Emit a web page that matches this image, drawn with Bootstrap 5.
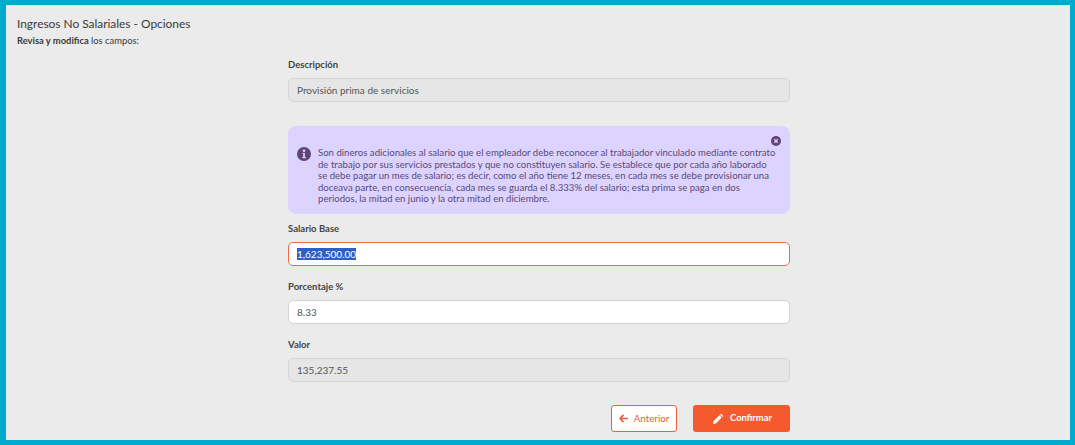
<!DOCTYPE html>
<html lang="es">
<head>
<meta charset="utf-8">
<title>Ingresos No Salariales</title>
<link href="https://cdn.jsdelivr.net/npm/bootstrap@5.3.0/dist/css/bootstrap.min.css" rel="stylesheet">
<style>
html,body{height:100%;margin:0;overflow:hidden}
body{font-family:Lato,"Liberation Sans",sans-serif;background:#ebebeb;color:#3b3b3b}
.frame{height:445px;border:5px solid #00aacc;border-left-width:6px;background:#ebebeb;padding:11px 11px 0 11px}
.page-title{font-size:11.9px;line-height:16px;font-weight:400;margin:0;color:#3a3a3a}
.page-sub{font-size:9.4px;line-height:13px;margin:2px 0 0;color:#3a3a3a}
.page-sub b{font-weight:700}
.form-col{width:502px;margin-left:271px;padding-top:12px}
.fld-label{font-size:9.5px;line-height:12px;font-weight:700;color:#444;margin:0 0 7px;display:block}
.fld-input.form-control{height:24px;font-size:10px;line-height:14px;padding:0 8px;border-radius:5px;border:1px solid #d4d4d4;color:#555;background:#fff;font-family:Lato,"Liberation Sans",sans-serif;box-shadow:none}
.fld-input.form-control:disabled,.fld-input.form-control[readonly]{background:#e6e6e6;color:#555;border-color:#d6d6d6}
.fld-input.is-hot.form-control{border-color:#f26a45}
.fld-input::selection{background:#2e5fc6;color:#fff}
.fld-gap{margin-bottom:15px}
.note{background:#dcd3ff;border-radius:8px;height:88px;margin:24px 0 9px;padding:21px 12px 0 9px;color:#5a4a78;font-size:9.6px;line-height:11.6px;gap:7px}
.note p{margin:0}
.note-x{top:10px;right:9px;width:10px;height:10px;line-height:0}
.btn-back.btn{width:66px;height:27px;padding:0;font-size:9.8px;border:1px solid #e8603c;background:#fff;color:#e8603c;border-radius:3px;gap:6px}
.btn-go.btn{width:97px;height:27px;padding:0 0 0 2px;font-size:9.4px;font-weight:700;border:0;background:#f55a2e;color:#fff;border-radius:3px;gap:7px}
.btn-row{margin-top:23px;gap:16px}
</style>
</head>
<body>
<div class="frame">
  <h1 class="page-title">Ingresos No Salariales - Opciones</h1>
  <p class="page-sub"><b>Revisa y modifica</b> los campos:</p>
  <div class="form-col">
    <label class="fld-label" for="d1">Descripción</label>
    <input id="d1" class="form-control fld-input" value="Provisión prima de servicios" readonly>
    <div class="note position-relative d-flex align-items-start">
      <svg width="14" height="14" viewBox="0 0 14 14" class="flex-shrink-0" aria-hidden="true"><circle cx="7" cy="7" r="7" fill="#5f4673"/><circle cx="7" cy="3.7" r="1.3" fill="#dcd3ff"/><path d="M5.4 5.9h2.5v4.2h.9v1.1H5.3v-1.1h.9V7H5.4z" fill="#dcd3ff"/></svg>
      <p>Son dineros adicionales al salario que el empleador debe reconocer al trabajador vinculado mediante contrato de trabajo por sus servicios prestados y que no constituyen salario. Se establece que por cada año laborado se debe pagar un mes de salario; es decir, como el año tiene 12 meses, en cada mes se debe provisionar una doceava parte, en consecuencia, cada mes se guarda el 8.333% del salario; esta prima se paga en dos periodos, la mitad en junio y la otra mitad en diciembre.</p>
      <span class="note-x position-absolute"><svg width="10" height="10" viewBox="0 0 10 10" aria-hidden="true"><circle cx="5" cy="5" r="5" fill="#5f4673"/><path d="M3.3 3.3l3.4 3.4M6.7 3.3L3.3 6.7" stroke="#dcd3ff" stroke-width="1.3"/></svg></span>
    </div>
    <label class="fld-label" for="d2">Salario Base</label>
    <input id="d2" class="form-control fld-input is-hot fld-gap" value="1,623,500.00">
    <label class="fld-label" for="d3">Porcentaje %</label>
    <input id="d3" class="form-control fld-input fld-gap" value="8.33">
    <label class="fld-label" for="d4">Valor</label>
    <input id="d4" class="form-control fld-input" value="135,237.55" readonly>
    <div class="d-flex justify-content-end btn-row">
      <button type="button" class="btn btn-back d-inline-flex align-items-center justify-content-center"><svg width="9" height="9" viewBox="0 0 10 10" aria-hidden="true"><path d="M5 1L1.2 5 5 9M1.5 5H10" fill="none" stroke="#e8603c" stroke-width="1.8"/></svg>Anterior</button>
      <button type="button" class="btn btn-go d-inline-flex align-items-center justify-content-center"><svg width="10" height="10" viewBox="0 0 10 10" aria-hidden="true"><path d="M0 10l.6-2.9L6.4 1.3l2.3 2.3L2.9 9.4zM7 .7l.6-.5c.3-.3.7-.3 1 0l1.2 1.2c.3.3.3.7 0 1l-.5.6z" fill="#fff"/></svg>Confirmar</button>
    </div>
  </div>
</div>
<script src="https://cdn.jsdelivr.net/npm/bootstrap@5.3.0/dist/js/bootstrap.bundle.min.js"></script>
<script>var f=document.getElementById('d2');f.focus();f.select();</script>
</body>
</html>
